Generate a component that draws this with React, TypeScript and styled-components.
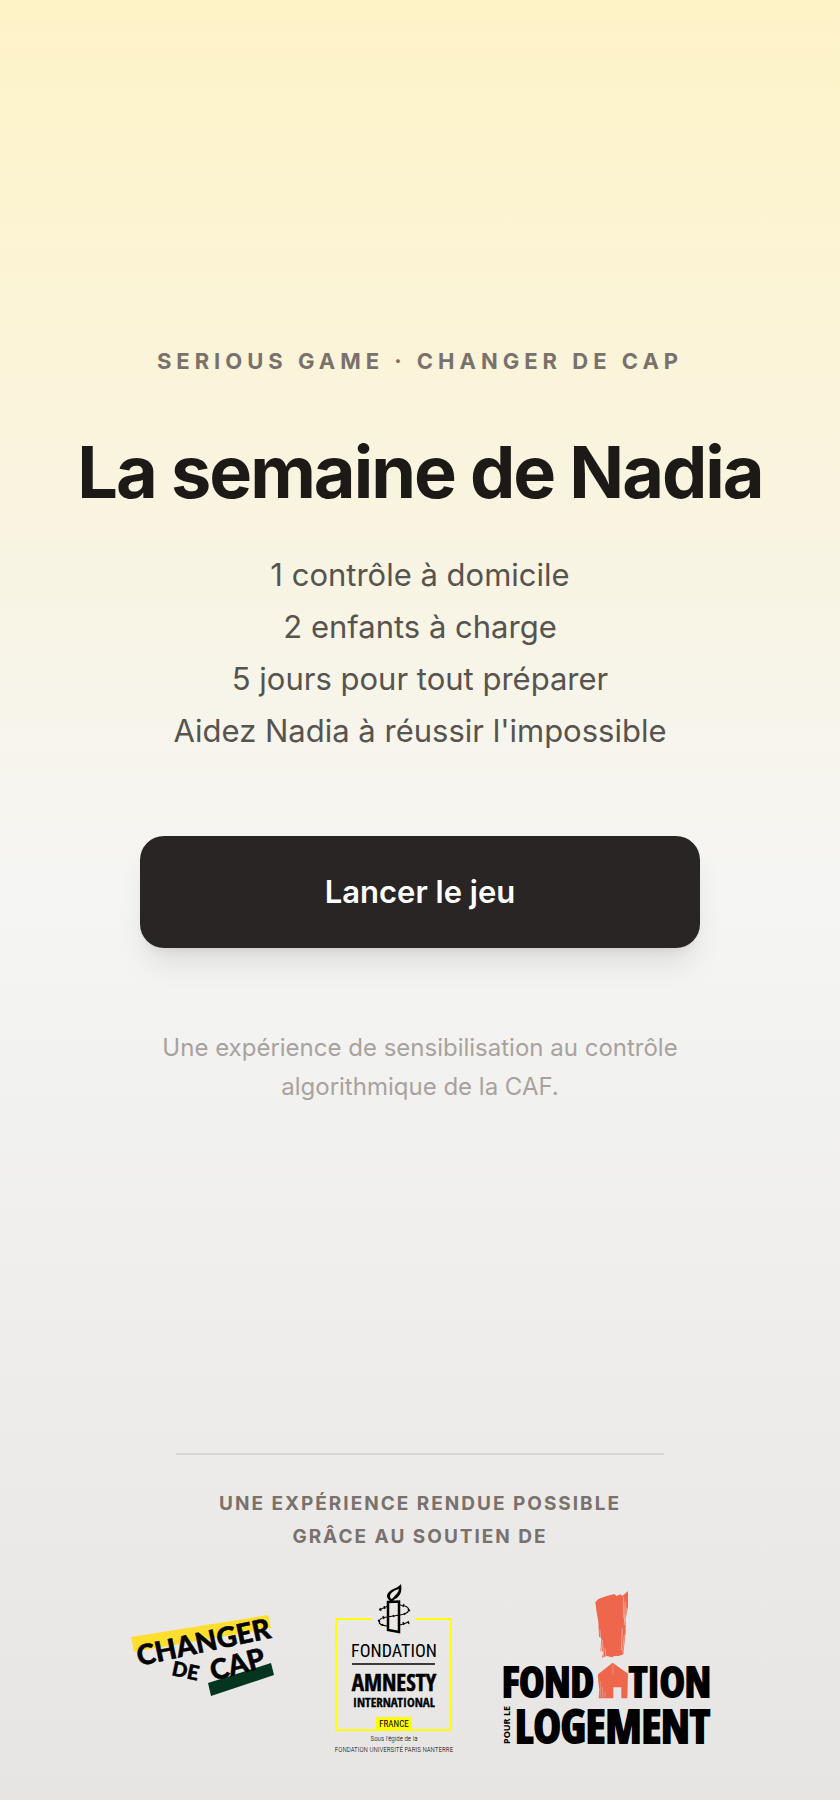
import React from "react";
import styled, { createGlobalStyle } from "styled-components";

const GlobalStyle = createGlobalStyle`
  *, *::before, *::after { box-sizing: border-box; }
  body {
    margin: 0;
    font-family: Inter, "Liberation Sans", sans-serif;
    -webkit-font-smoothing: antialiased;
  }
`;

const Page = styled.div`
  min-height: 100vh;
  display: flex;
  flex-direction: column;
  align-items: center;
  background: linear-gradient(to bottom, #fef3c7, #f5f5f4 50%, #e7e5e4);
`;

const Hero = styled.main`
  flex: 1;
  width: 100%;
  padding: 48px 48px 50px;
  display: flex;
  flex-direction: column;
  align-items: center;
  justify-content: center;
  text-align: center;
`;

const Eyebrow = styled.p`
  margin: 0 0 50px;
  font-size: 22px;
  line-height: 32px;
  font-weight: 700;
  letter-spacing: 5px;
  text-transform: uppercase;
  color: #78716c;
`;

const Title = styled.h1`
  margin: 0 0 32px;
  font-size: 72px;
  line-height: 90px;
  font-weight: 700;
  letter-spacing: -2px;
  color: #1c1917;
`;

const Facts = styled.ul`
  margin: 0 0 79px;
  padding: 0;
  list-style: none;
  font-size: 31px;
  line-height: 52px;
  color: #57534e;
`;

const StartButton = styled.button`
  width: 100%;
  max-width: 560px;
  margin: 0 0 80px;
  padding: 32px;
  border: 0;
  border-radius: 24px;
  background: #292524;
  color: #fff;
  font-family: inherit;
  font-size: 31px;
  line-height: 48px;
  font-weight: 600;
  cursor: pointer;
  box-shadow: 0 20px 30px -6px rgba(0, 0, 0, 0.1), 0 8px 12px -8px rgba(0, 0, 0, 0.1);
`;

const Caption = styled.p`
  max-width: 560px;
  margin: 0;
  font-size: 24px;
  line-height: 39px;
  color: #a8a29e;
`;

const Footer = styled.footer`
  width: 100%;
  padding: 0 48px 46px;
  display: flex;
  flex-direction: column;
  align-items: center;
  text-align: center;
`;

const Support = styled.p`
  width: 100%;
  max-width: 488px;
  margin: 0 0 31px;
  padding-top: 32px;
  border-top: 2px solid #d6d5d3;
  font-size: 19px;
  line-height: 33px;
  font-weight: 700;
  letter-spacing: 2px;
  text-transform: uppercase;
  color: #78716c;
`;

const Logos = styled.div`
  display: flex;
  flex-wrap: wrap;
  align-items: center;
  justify-content: center;
  gap: 24px 48px;
`;

const Logo = styled.svg`
  display: block;
  flex: none;
  overflow: visible;
`;

const LogoText = styled.text<{ $size: number; $weight?: number; $family?: string }>`
  font-family: ${(p) => p.$family ?? '"Open Sans Condensed"'}, "Roboto Condensed", sans-serif;
  font-size: ${(p) => p.$size}px;
  font-weight: ${(p) => p.$weight ?? 700};
`;

const LIGHT = '"Roboto Condensed"';

const ChangerDeCap = () => (
  <Logo width="156" height="170" viewBox="0 0 156 170" role="img" aria-label="Changer de Cap">
    <path d="M1 53 138 31 141 44 4 68Z" fill="#ffde2e" />
    <path d="M78 99 141 79 144 91 81 112Z" fill="#04351f" />
    <g stroke="#000" strokeWidth="0.500">
      <LogoText $family="Lato" $weight={900} $size={28} transform="translate(9 82) rotate(-12)">CHANGER</LogoText>
      <LogoText $family="Lato" $weight={900} $size={20} transform="translate(41 91) rotate(12)">DE</LogoText>
      <LogoText $family="Lato" $weight={900} $size={28} transform="translate(83 97) rotate(-15)">CAP</LogoText>
    </g>
  </Logo>
);

const Amnesty = () => (
  <Logo width="120" height="170" viewBox="0 0 120 170" role="img" aria-label="Fondation Amnesty International France">
    <path d="M37 35H2V146H117V35H82" fill="none" stroke="#ff0" strokeWidth="2" />
    <path d="M42 133H77V147H42Z" fill="#ff0" />
    <path
      fillRule="evenodd"
      d="M56 17C52 14 52 10 56 7 60 4 64 4 67 0 68 6 67 10 64 13 62 15 60 15 59 17ZM58 15C60 12 64 10 65 5 61 6 57 8 56 12 56 14 57 15 58 15Z"
    />
    <path d="M54 18 65 17.500V48L54 46Z" fill="none" stroke="#000" strokeWidth="2.500" />
    <g fill="none" stroke="#000" strokeWidth="1.200">
      <path d="M45 26 54 22M66 21C77 22 78 29 66 31L53 33C43 34 42 41 53 42M66 41 75 38" />
      <path d="M46 24 47 27M50 22 51 25M70 20 69 23M74 25 76 27M70 29 71 31M59 31 60 33M49 32 50 35M44 36 46 38M49 40 48 42M69 38 70 41M74 37 75 40" />
    </g>
    <LogoText $family={LIGHT} $size={18} $weight={400} x="60" y="73" textAnchor="middle">FONDATION</LogoText>
    <path d="M18 80H101" stroke="#000" strokeWidth="1.500" />
    <LogoText $size={23} x="60" y="107" textAnchor="middle" stroke="#000" strokeWidth="0.500">AMNESTY</LogoText>
    <LogoText $size={13} x="60" y="123" textAnchor="middle" stroke="#000" strokeWidth="0.300">INTERNATIONAL</LogoText>
    <LogoText $family={LIGHT} $size={9} $weight={400} x="60" y="143" textAnchor="middle">FRANCE</LogoText>
    <LogoText $family={LIGHT} $size={7} $weight={300} x="60" y="157" textAnchor="middle">Sous l'égide de la</LogoText>
    <LogoText $family={LIGHT} $size={7} $weight={300} x="60" y="168" textAnchor="middle">FONDATION UNIVERSITÉ PARIS NANTERRE</LogoText>
  </Logo>
);

const Logement = () => (
  <Logo width="208" height="170" viewBox="0 0 208 170" role="img" aria-label="Fondation pour le Logement">
    <g transform="translate(-12 -9) scale(0.3333)">
      <path
        fill="#ee664b"
        d="M316 82 325 72 350 63 374 57 379 63 392 58 396 63 405 56 414 48 414 95 407 135 407 170 400 238 386 243 372 243 366 247 350 243 336 248 340 230 331 228 334 190 327 185 325 140 320 112Z"
      />
      <path fill="#ee664b" d="M368 263 414 296 412 370H394V337H370V370H326L328 345 325 320 324 298Z" />
      <g stroke="#e9e7e6" strokeWidth="1.500" fill="none">
        <path d="M401 65V130M406 80 403 150M410 98 405 140M397 160 394 225M403 180 398 232" />
        <path d="M330 165 335 240M337 195 341 245M345 220 348 246M334 210V230" />
        <path d="M369 268V300M331 320V366M338 335 337 370M345 350V368" strokeWidth="1" />
      </g>
    </g>
    <g stroke="#000" strokeWidth="2">
      <LogoText $size={42} x="0" y="113">FOND</LogoText>
      <LogoText $size={42} x="127" y="113">TION</LogoText>
      <LogoText $size={46} x="13" y="159">LOGEMENT</LogoText>
    </g>
    <LogoText $family="Open Sans" $size={9} transform="translate(8 160) rotate(-90)">POUR LE</LogoText>
  </Logo>
);

export default function App() {
  return (
    <>
      <GlobalStyle />
      <Page>
        <Hero>
          <Eyebrow>Serious game · Changer de Cap</Eyebrow>
          <Title>La semaine de Nadia</Title>
          <Facts>
            <li>1 contrôle à domicile</li>
            <li>2 enfants à charge</li>
            <li>5 jours pour tout préparer</li>
            <li>Aidez Nadia à réussir l'impossible</li>
          </Facts>
          <StartButton type="button">Lancer le jeu</StartButton>
          <Caption>Une expérience de sensibilisation au contrôle algorithmique de la CAF.</Caption>
        </Hero>
        <Footer>
          <Support>
            Une expérience rendue possible
            <br />
            grâce au soutien de
          </Support>
          <Logos>
            <ChangerDeCap />
            <Amnesty />
            <Logement />
          </Logos>
        </Footer>
      </Page>
    </>
  );
}
